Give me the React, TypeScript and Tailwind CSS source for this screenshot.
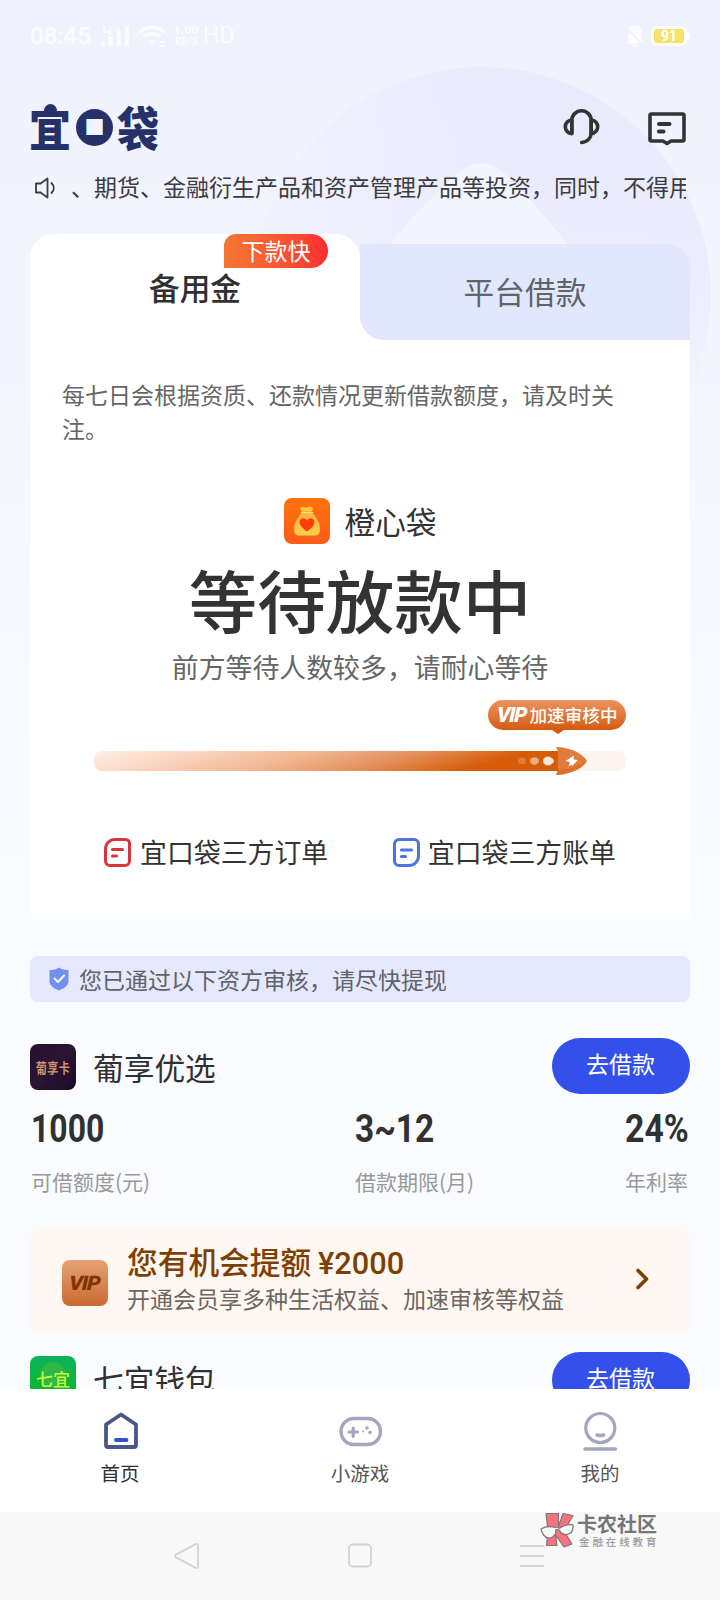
import type { ReactNode } from "react";

const StatusBar = () => (
  <div className="relative flex h-[72px] items-center justify-between px-[30px] text-white/80">
    <div className="flex items-center font-['Roboto']">
      <span className="w-[62px] text-2xl leading-6 font-medium">08:45</span>
      <svg className="ml-[9px]" width="30" height="22" viewBox="0 0 30 22" fill="currentColor">
        <rect x="0" y="16" width="4" height="5" />
        <rect x="7" y="12" width="5" height="9" />
        <rect x="16" y="6" width="4" height="15" />
        <rect x="24" y="1" width="4" height="20" />
        <path d="M2 1h2v5h4V1h2v9H8V8H2z" />
      </svg>
      <svg
        className="ml-[7px]"
        width="30"
        height="24"
        viewBox="0 0 30 24"
        fill="none"
        stroke="currentColor"
        strokeWidth="3.4"
      >
        <path d="M1.5 8.5a18 18 0 0 1 25 0M6 13a11.500 11.500 0 0 1 16 0" />
        <path d="M14 20.500l-3.500-3.600a5.200 5.200 0 0 1 7 0z" fill="currentColor" stroke="none" />
        <path d="M22 18h5M22 22h5" strokeWidth="2" />
      </svg>
      <div className="ml-[5px] flex w-[27px] flex-col items-center text-[10px] leading-[11px] font-bold">
        <span className="scale-x-125">1.00</span>
        <span>KB/S</span>
      </div>
      <span className="ml-[3px] text-[23px] leading-6">HD</span>
    </div>
    <div className="flex items-center">
      <svg width="20" height="22" viewBox="0 0 20 22" fill="currentColor">
        <path d="M4 3.500A7 7 0 0 1 17 8v7l2 3H6z" />
        <path d="M3 7.500L13 18.500H1l2-3zM7 19.500h6a3 3 0 0 1-6 0z" />
        <path d="M1 2l17 18" stroke="#eff0fd" strokeWidth="1.400" />
      </svg>
      <div className="ml-[6px] flex h-[20px] w-[36px] items-center justify-center rounded-md border-[3px] border-white bg-[#f5e26c] font-['Roboto'] text-[14px] leading-none font-bold text-white">
        91
      </div>
      <div className="h-2 w-[3px] rounded-r bg-white" />
    </div>
  </div>
);

const Logo = () => (
  <div className="flex h-[46px] items-center font-black text-[#26316a]">
    <span className="relative w-[40px]">
      <span className="block -translate-x-px -translate-y-px scale-y-110 text-[42px] leading-[46px]">
        宜
      </span>
      <span className="absolute top-0 left-[14px] size-[13px] rounded-full bg-[#26316a]" />
    </span>
    <span className="ml-[6px] flex size-[37px] items-center justify-center rounded-full bg-[#26316a]">
      <span className="flex size-[17px] items-center justify-center bg-[#f1f3fe] text-[28px] leading-[17px] font-normal">
        <span className="-translate-y-px">口</span>
      </span>
    </span>
    <span className="ml-[5px] w-[40px] -translate-x-px -translate-y-px scale-y-110 text-[42px] leading-[46px]">
      袋
    </span>
  </div>
);

const Header = () => (
  <header className="relative flex h-[103px] items-start justify-between pt-8 pr-[32px] pl-[30px]">
    <Logo />
    <div className="flex text-[#333]">
      <svg
        className="mt-1"
        width="38"
        height="38"
        viewBox="0 0 38 38"
        fill="none"
        stroke="currentColor"
        strokeWidth="3.600"
        strokeLinecap="round"
        strokeLinejoin="round"
      >
        <path d="M8.800 25.500V12.500a9.700 9.700 0 0 1 19.400 0V24c0 6-4 10-9.500 10.500" />
        <path d="M8.800 12a6.500 6.800 0 0 0 0 13.600z" />
        <path d="M28.200 12a6.500 6.800 0 0 1 0 13.600z" />
      </svg>
      <svg
        className="mt-[7px] ml-[47px]"
        width="40"
        height="36"
        viewBox="0 0 40 36"
        fill="none"
        stroke="currentColor"
        strokeWidth="3.600"
        strokeLinecap="round"
        strokeLinejoin="round"
      >
        <path d="M3.500 3h31a1.500 1.500 0 0 1 1.500 1.500v24a1.500 1.500 0 0 1-1.500 1.500H23l-4 2.500-4-2.500H3.500A1.500 1.500 0 0 1 2 28.500v-24A1.500 1.500 0 0 1 3.500 3z" />
        <path d="M11 13h10.500M11 20.500h4.500" strokeWidth="4" />
      </svg>
    </div>
  </header>
);

const Notice = () => (
  <div className="relative flex h-6 items-center pr-[34px] pl-[34px] text-[#3c3c40]">
    <svg
      className="mt-[2px] shrink-0"
      width="24"
      height="24"
      viewBox="0 0 24 24"
      fill="none"
      stroke="currentColor"
      strokeWidth="1.800"
      strokeLinejoin="round"
    >
      <path d="M2 7.500h4.500L13.500 2.500v19l-7-5H2z" />
      <path d="M17.500 7c3 3 3 7 0 10" strokeLinecap="round" />
    </svg>
    <p className="ml-[13px] h-[34px] flex-1 overflow-hidden text-[23px] leading-[33px] whitespace-nowrap">
      、期货、金融衍生产品和资产管理产品等投资，同时，不得用
    </p>
  </div>
);

const Tabs = () => (
  <div className="flex h-[106px]">
    <div className="relative flex w-[330px] justify-center rounded-t-3xl bg-white pt-8 text-[30.700px] leading-[42px] font-medium text-[#303030]">
      备用金
      <span className="absolute top-0 left-[194px] h-[34px] w-[104px] rounded-tl-xl rounded-r-[17px] bg-linear-to-r from-[#f67631] to-[#fd2b32] text-center text-[23px] leading-[32px] font-normal text-white">
        下款快
      </span>
    </div>
    <div className="mt-[10px] flex h-24 w-[330px] items-center justify-center rounded-tr-3xl rounded-bl-3xl bg-[#e1e8fe] pb-[2px] text-[30.700px] leading-[42px] text-[#606369]">
      平台借款
    </div>
  </div>
);

const BagIcon = () => (
  <svg width="46" height="46" viewBox="0 0 46 46">
    <defs>
      <linearGradient id="bag" x1="0" y1="0" x2="0" y2="1">
        <stop offset="0" stopColor="#ff720c" />
        <stop offset="1" stopColor="#fb5c1a" />
      </linearGradient>
      <linearGradient id="bagBody" x1="0" y1="0" x2="0" y2="1">
        <stop offset="0" stopColor="#f9b13a" />
        <stop offset="1" stopColor="#fed04a" />
      </linearGradient>
    </defs>
    <rect width="46" height="46" rx="8" fill="url(#bag)" />
    <path
      d="M17 9.500c2-1.500 3.500.5 5.500 0s3-1.500 5-.5 1.500 3 0 4.500h-9.500c-1.500-1-2-3-1-4z"
      fill="#ffc93c"
    />
    <path
      d="M17.500 15h11c3.500 4 7.500 10 7.500 16 0 5-2 6.500-6 6.500H16c-4 0-6-1.500-6-6.500 0-6 4-12 7.500-16z"
      fill="url(#bagBody)"
    />
    <path d="M17.500 14.500h11" stroke="#ffdf70" strokeWidth="1.500" strokeLinecap="round" />
    <path
      d="M23 33.500c-3.500-2.500-7.500-6-7.500-9.500 0-4.500 5.500-5 7.500-1.500 2-3.500 7.500-3 7.500 1.500 0 3.500-4 7-7.500 9.500z"
      fill="#fb3f0c"
    />
  </svg>
);

const Progress = () => (
  <div className="flex w-[532px] flex-col">
    <div className="relative flex h-[30px] w-[138px] items-center justify-center self-end rounded-full bg-linear-to-b from-[#eb935c] to-[#d45c09] text-white">
      <span className="w-[33px] origin-left -skew-x-12 scale-x-[.95] font-['Roboto'] text-[21px] leading-none font-black tracking-[-1px]">
        VIP
      </span>
      <span className="text-[17.600px] leading-none font-medium">加速审核中</span>
      <span className="absolute top-full left-[64px] border-x-[6px] border-t-[4px] border-x-transparent border-t-[#d45c09]" />
    </div>
    <div className="relative mt-[21px] h-5 rounded-[8px] bg-[#fff5ef]">
      <div className="h-5 w-[464px] rounded-l-[8px] bg-[linear-gradient(164deg,#fff0e7_0%,#fcdccb_15%,#f0b793_42%,#e38f5a_62%,#d65c07_82%,#d65c07_100%)]" />
      <svg className="absolute top-[-5px] left-[422px]" width="72" height="30" viewBox="0 0 72 30">
        <ellipse cx="6" cy="15" rx="4" ry="3.200" fill="#df7b3c" />
        <ellipse cx="18.500" cy="15" rx="4.500" ry="3.800" fill="#ebab83" />
        <path d="M27 15c0-3 2.500-4.500 5-4.500s6 3 6 4.500-3.500 4.500-6 4.500-5-1.500-5-4.500z" fill="#fbe6d8" />
        <path d="M40 1c12 0 27 6 31 14-4 8-19 14-31 14l2-4.500V5.500z" fill="#e27c3e" />
        <path d="M40 29c12 0 26-6 31-14-8 5-18 8-29 8.500z" fill="#d9691f" opacity=".6" />
        <path d="M58 9.500l-8.500 5.500 4.500 1-1.500 4.500 3-2 .5 1.500 6-6-4.500-.5z" fill="#fff" />
      </svg>
    </div>
  </div>
);

const OrderIcon = () => (
  <svg
    width="27"
    height="29"
    viewBox="0 0 27 29"
    fill="none"
    stroke="#da353b"
    strokeWidth="3"
    strokeLinecap="round"
  >
    <path d="M11 1.500h10.500a4 4 0 0 1 4 4v17.500a4.500 4.500 0 0 1-4.500 4.500H6A4.500 4.500 0 0 1 1.500 23V11A9.500 9.500 0 0 1 11 1.500z" />
    <path d="M8.500 11.500h10M8.500 18h4" strokeWidth="3.200" />
  </svg>
);

const BillIcon = () => (
  <svg
    width="27"
    height="29"
    viewBox="0 0 27 29"
    fill="none"
    stroke="#4c76dd"
    strokeWidth="3"
    strokeLinecap="round"
  >
    <path d="M6 1.500h15A4.500 4.500 0 0 1 25.500 6v12a9.500 9.500 0 0 1-9.500 9.500H6A4.500 4.500 0 0 1 1.500 23V6A4.500 4.500 0 0 1 6 1.500z" />
    <path d="M8.500 12h10M8.500 18.500h4" strokeWidth="3.200" />
  </svg>
);

const LoanCard = () => (
  <section className="relative mx-[30px] mt-[35px] h-[686px] shrink-0">
    <div className="absolute inset-x-0 top-[60px] bottom-0 rounded-b-lg bg-white" />
    <div className="relative">
      <Tabs />
      <p className="mt-[37px] h-[70px] w-[600px] pl-8 text-[23px] leading-[34px] text-[#666]">
        每七日会根据资质、还款情况更新借款额度，请及时关注。
      </p>
      <div className="mt-[51px] flex flex-col items-center">
        <div className="flex h-[46px] items-center gap-[14px] pl-px">
          <BagIcon />
          <span className="text-[30.700px] leading-[46px] text-[#333]">橙心袋</span>
        </div>
        <h1 className="mt-[7px] text-[68.500px] leading-[96px] font-medium text-[#333]">
          等待放款中
        </h1>
        <p className="mt-[1px] h-[52px] text-[26.900px] leading-[38px] text-[#666]">
          前方等待人数较多，请耐心等待
        </p>
        <Progress />
        <div className="mt-[62px] flex w-[512px] items-center justify-between text-[26.900px] leading-[40px] text-[#333]">
          <div className="flex items-center gap-[9px]">
            <OrderIcon />
            <span className="-mt-px">宜口袋三方订单</span>
          </div>
          <div className="flex items-center gap-2">
            <BillIcon />
            <span className="-mt-px">宜口袋三方账单</span>
          </div>
        </div>
      </div>
    </div>
  </section>
);

const ReviewBanner = () => (
  <div className="relative mx-[30px] mt-9 flex h-[46px] shrink-0 items-center rounded-lg bg-[#e6e8fb] pl-[19px]">
    <svg width="20" height="24" viewBox="0 0 20 24">
      <path
        d="M10 .5c2.500 2 6 2.500 9.500 2.500V14c0 5-5.500 8-9.500 9.500C6 22 .5 19 .5 14V3C4 3 7.500 2.500 10 .5z"
        fill="#7190f4"
      />
      <path
        d="M5.500 11.500L9 15l6-6.500"
        fill="none"
        stroke="#fff"
        strokeWidth="2"
        strokeLinecap="round"
        strokeLinejoin="round"
      />
    </svg>
    <span className="-mt-px ml-[10px] text-[23px] leading-[46px] text-[#60626c]">
      您已通过以下资方审核，请尽快提现
    </span>
  </div>
);

const ProductHead = ({
  icon,
  name,
  buttonClass,
}: {
  icon: ReactNode;
  name: string;
  buttonClass: string;
}) => (
  <div className="flex h-[46px] items-start">
    {icon}
    <span className="ml-[17px] flex-1 text-[30.700px] leading-[45px] text-[#303030]">{name}</span>
    <button
      className={`h-[56px] w-[138px] rounded-full bg-[#3350ea] pr-px pb-[6px] text-[23px] leading-[50px] text-white ${buttonClass}`}
    >
      去借款
    </button>
  </div>
);

const stats = [
  { value: "1000", label: "可借额度(元)", className: "w-[324px]", scale: "scale-x-[.84]" },
  { value: "3~12", label: "借款期限(月)", className: "flex-1", scale: "scale-x-[.88]" },
  { value: "24%", label: "年利率", className: "w-[65px]", scale: "scale-x-[.89]" },
];

const ProductList = () => (
  <section className="relative flex flex-1 flex-col overflow-hidden px-[30px] pt-[42px]">
    <ProductHead
      name="葡享优选"
      buttonClass="-mt-[6px]"
      icon={
        <div className="flex size-[46px] items-center justify-center rounded-lg bg-linear-to-br from-[#26102f] via-[#2a1534] to-[#1a0a24] text-[#cf9269]">
          <span className="scale-y-125 text-[11px] leading-none font-bold tracking-[.5px]">
            葡享卡
          </span>
        </div>
      }
    />
    <div className="mt-[18px] flex pl-[1px]">
      {stats.map((item) => (
        <div key={item.label} className={item.className}>
          <div
            className={`origin-left font-['Roboto'] text-[38px] leading-[42px] font-bold whitespace-nowrap text-[#303133] ${item.scale}`}
          >
            {item.value}
          </div>
          <div className="mt-4 text-[21px] leading-[30px] whitespace-nowrap text-[#999]">
            {item.label}
          </div>
        </div>
      ))}
    </div>
    <div className="mt-[34px] flex h-[103px] shrink-0 items-center rounded-lg bg-[#fff7f1] px-8">
      <div className="mt-[2px] flex size-[46px] items-center justify-center rounded-lg bg-linear-to-b from-[#e4a274] to-[#ca6930]">
        <span className="-skew-x-12 scale-x-105 font-['Roboto'] text-[20px] leading-none font-black tracking-[-1px] text-[#803400]">
          VIP
        </span>
      </div>
      <div className="-mt-[7px] ml-[19px] flex-1">
        <div className="text-[30.700px] leading-[40px] font-medium text-[#7d4004]">
          您有机会提额 <span className="font-['Roboto']">¥2000</span>
        </div>
        <div className="-mt-[3px] text-[23px] leading-[34px] text-[#6c6662]">
          开通会员享多种生活权益、加速审核等权益
        </div>
      </div>
      <svg
        className="mt-[-5px] mr-[8px]"
        width="16"
        height="24"
        viewBox="0 0 16 24"
        fill="none"
        stroke="#7d4004"
        strokeWidth="3.600"
        strokeLinecap="round"
        strokeLinejoin="round"
      >
        <path d="M4 3.500l8.500 8.500L4 20.500" />
      </svg>
    </div>
    <div className="mt-[23px]">
      <ProductHead
        name="七宜钱包"
        buttonClass="-mt-1"
        icon={
          <div className="relative flex size-[46px] justify-center overflow-hidden rounded-lg bg-linear-to-b from-[#0db35b] to-[#0cb80c] pt-[14px] text-[17px] leading-[18px] font-medium text-[#c9f63c]">
            <span className="absolute top-[6px] left-[10px] size-[26px] rounded-full bg-[#2fb848]" />
            <span className="relative">七宜</span>
          </div>
        }
      />
    </div>
  </section>
);

const TabBar = () => (
  <nav className="relative grid h-[123px] shrink-0 grid-cols-3 bg-white text-[19.500px] leading-[28px] text-[#555]">
    <div className="flex flex-col items-center pt-[22px] text-[#303030]">
      <svg
        className="ml-[1px]"
        width="38"
        height="40"
        viewBox="0 0 38 40"
        fill="none"
        strokeLinecap="round"
        strokeLinejoin="round"
      >
        <path
          d="M19 3.500L34 13.500V34a2 2 0 0 1-2 2H6a2 2 0 0 1-2-2V13.500z"
          stroke="#495689"
          strokeWidth="3.800"
        />
        <path d="M14 29h10.500" stroke="#2f53cf" strokeWidth="3.800" />
      </svg>
      <span className="mt-[8px]">首页</span>
    </div>
    <div className="flex flex-col items-center pt-[22px]">
      <svg
        className="ml-[2px]"
        width="44"
        height="40"
        viewBox="0 0 44 40"
        fill="none"
        stroke="#a3a6bc"
        strokeLinecap="round"
      >
        <rect x="2" y="7.500" width="39.500" height="26" rx="13" strokeWidth="3.400" />
        <path d="M10 21h8.500M14.200 17v8.500" strokeWidth="3.200" />
        <g fill="#a3a6bc" stroke="none">
          <circle cx="28" cy="17" r="1.800" />
          <circle cx="24" cy="20.500" r="1" />
          <circle cx="31" cy="21.500" r="1.800" />
        </g>
      </svg>
      <span className="mt-[8px]">小游戏</span>
    </div>
    <div className="flex flex-col items-center pt-[22px]">
      <svg width="38" height="40" viewBox="0 0 38 40" fill="none" stroke="#a3a6bc" strokeLinecap="round">
        <circle cx="19.300" cy="17" r="14.500" strokeWidth="3.200" />
        <path d="M16 24q3.300 1 6.600 0" strokeWidth="3.400" />
        <path d="M4 38h30.500" strokeWidth="3.400" />
      </svg>
      <span className="mt-[8px]">我的</span>
    </div>
  </nav>
);

const Watermark = () => (
  <div className="absolute top-0 left-[540px] flex">
    <svg width="36" height="38" viewBox="0 0 36 38" stroke="#80757a" strokeWidth="1.200" strokeLinejoin="round">
      <path d="M6 1.500h12.500v13L23 1.500l10 2L24 19l8 13-8 3-8.500-12 1.500 10.500H6.500L8 19z" fill="#f4737c" />
      <path
        d="M1 17c4-2.500 9-3 14.500-1.500 1.500 0 3 .3 4 .8 4-3 8-4 13.500-3.500.5 6-2 9.200-6.500 9.700-4 .3-6-1.500-7-4.500l-3.500-.5c0 5-2.500 8-6.500 8.500C4.500 26 2 21.500 1 17z"
        fill="#f8f8f8"
      />
    </svg>
    <div className="ml-[1px]">
      <div className="text-[20px] leading-[23px] font-bold text-[#757575]">卡农社区</div>
      <div className="ml-[2px] text-[10.500px] leading-[13px] font-medium tracking-[2.900px] text-[#9c9c9c]">
        金融在线教育
      </div>
    </div>
  </div>
);

const SystemNav = () => (
  <div className="relative h-[88px] shrink-0 bg-[#f8f8f8]">
    <div className="grid h-[88px] grid-cols-[174px_1fr_1fr_1fr] items-center text-[#d2d2d2]">
      <span />
      <svg width="27" height="28" viewBox="0 0 27 28" fill="none" stroke="currentColor" strokeWidth="1.800">
        <path d="M1.800 12.600L21.500 2.200q2.500-1 2.500 1.300v21q0 2.500-2.500 1.300L1.800 15.200q-1.600-1.300 0-2.600z" />
      </svg>
      <svg className="-ml-[9px]" width="26" height="26" viewBox="0 0 26 26" fill="none" stroke="currentColor" strokeWidth="1.800">
        <rect x="2" y="1.500" width="22" height="22" rx="4" />
      </svg>
      <svg className="-ml-[18px]" width="24" height="24" viewBox="0 0 24 24" stroke="currentColor" strokeWidth="2">
        <path d="M0 2h24M0 12h24M0 22h24" />
      </svg>
    </div>
    <Watermark />
  </div>
);

const Backdrop = () => (
  <svg className="absolute inset-0" width="720" height="700" viewBox="0 0 720 700">
    <defs>
      <linearGradient id="disc" x1="0.6" y1="0" x2="0.5" y2="1">
        <stop offset="0" stopColor="#e9eafc" />
        <stop offset=".4" stopColor="#ebecfd" />
        <stop offset=".75" stopColor="#f4f6ff" />
      </linearGradient>
      <linearGradient id="discFade" x1="0" y1="0" x2="1" y2="0">
        <stop offset="0" stopColor="#f0f2fe" />
        <stop offset=".5" stopColor="#f0f2fe" stopOpacity="0" />
      </linearGradient>
    </defs>
    <circle cx="482" cy="296" r="229" fill="url(#disc)" />
    <circle cx="482" cy="296" r="229" fill="url(#discFade)" />
    <path d="M462 170q19-14 38 0c18 14 46 48 68 74v30H390v-30c22-26 54-60 72-74z" fill="#f3f5fe" />
  </svg>
);

const App = () => (
  <main className="relative flex h-[1600px] w-[720px] flex-col overflow-hidden bg-[linear-gradient(180deg,#eff1fe_0px,#f2f4fe_250px,#f7f9ff_620px,#fafbff_900px)] font-['Noto_Sans_CJK_SC',sans-serif]">
    <Backdrop />
    <StatusBar />
    <Header />
    <Notice />
    <LoanCard />
    <ReviewBanner />
    <ProductList />
    <TabBar />
    <SystemNav />
  </main>
);

export default App;
